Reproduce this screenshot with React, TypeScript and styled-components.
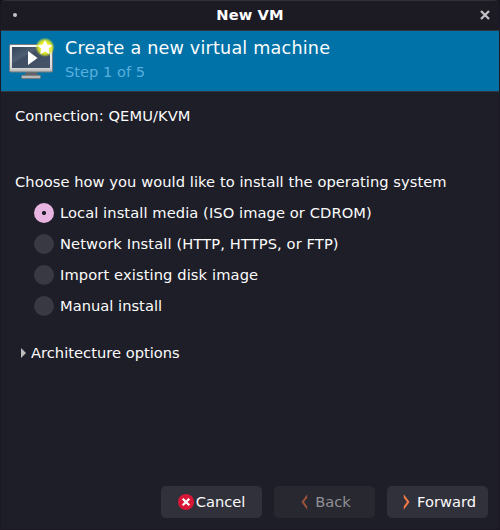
import React, { useState } from "react";
import styled, { createGlobalStyle } from "styled-components";

const GlobalStyle = createGlobalStyle`
  * { box-sizing: border-box; }
  body {
    margin: 0;
    background: #16141c;
    font-family: "DejaVu Sans", sans-serif;
    font-size: 14.667px;
    line-height: 17px;
    color: #fcfcfc;
  }
`;

const Window = styled.div`
  width: 500px;
  height: 530px;
  display: flex;
  flex-direction: column;
  background: #1e1e28;
  border: 1px solid #1a1823;
  border-top-color: #302f3a;
  border-radius: 6px 6px 0 0;
  overflow: hidden;
`;

const TitleBar = styled.header`
  height: 30px;
  flex: none;
  display: grid;
  grid-template-columns: 28px 1fr 28px;
  align-items: center;
  justify-items: center;
  background: #1c1a23;
  border-bottom: 1px solid #35353f;
`;

const WindowTitle = styled.h1`
  margin: 0;
  padding-bottom: 2px;
  font-size: 14.667px;
  font-weight: bold;
  line-height: 17px;
  letter-spacing: 0.12px;
  color: #fff;
`;

const MenuDot = styled.span`
  width: 4px;
  height: 4px;
  margin-top: -1px;
  border-radius: 50%;
  background: #c4c3c8;
`;

const IconButton = styled.button`
  display: flex;
  padding: 0 0 1px;
  border: 0;
  background: none;
`;

const Banner = styled.section`
  height: 61px;
  flex: none;
  display: flex;
  gap: 8px;
  padding-left: 8px;
  background: #0072a8;
  border-bottom: 1px solid #35353f;
`;

const BannerIcon = styled.svg`
  width: 48px;
  height: 48px;
  margin-top: 5px;
  flex: none;
`;

const BannerTitle = styled.h2`
  margin: 7px 0 0;
  font-size: 17.6px;
  font-weight: normal;
  line-height: 21px;
  letter-spacing: 0.19px;
`;

const BannerStep = styled.p`
  margin: 4px 0 0;
  color: #59afde;
`;

const Content = styled.main`
  flex: 1;
  display: flex;
  flex-direction: column;
  padding: 15px 14px 11px;
`;

const Line = styled.p<{ $tracking: number }>`
  margin: 0;
  letter-spacing: ${(p) => p.$tracking}px;
`;

const Prompt = styled(Line)`
  margin-top: 49px;
`;

const Options = styled.div`
  display: flex;
  flex-direction: column;
  gap: 11px;
  margin: 13px 0 0 19px;
`;

const Option = styled.label<{ $tracking: number }>`
  display: flex;
  align-items: center;
  gap: 6px;
  height: 20px;
  letter-spacing: ${(p) => p.$tracking}px;
`;

const OptionText = styled.span`
  padding-bottom: 2px;
`;

const Radio = styled.input`
  appearance: none;
  width: 20px;
  height: 20px;
  margin: 0;
  border-radius: 50%;
  background: #393943;
  &:checked {
    background: radial-gradient(circle, #1e1e28 1.7px, #e8b4e2 2.4px);
  }
`;

const Expander = styled.button`
  display: flex;
  align-items: center;
  align-self: flex-start;
  gap: 5px;
  margin: 28px 0 0 6px;
  padding: 0;
  border: 0;
  background: none;
  color: inherit;
  font: inherit;
  letter-spacing: 0.02px;
`;

const Actions = styled.footer`
  display: flex;
  justify-content: flex-end;
  gap: 12px;
  margin: auto -3px 0 0;
`;

const ActionButton = styled.button<{ $gap: number; $inset?: number }>`
  display: flex;
  align-items: center;
  justify-content: center;
  gap: ${(p) => p.$gap}px;
  width: 101px;
  height: 32px;
  padding: 0 0 0 ${(p) => p.$inset ?? 0}px;
  border: 0;
  border-radius: 5px;
  background: #31313b;
  color: #fcfcfc;
  font: inherit;
  &:disabled {
    background: #282831;
    color: #919196;
  }
`;

const ButtonText = styled.span`
  padding-bottom: 2px;
`;

const MonitorIcon = () => (
  <BannerIcon viewBox="0 0 48 48" aria-hidden="true">
    <defs>
      <linearGradient id="frame" x1="0" y1="0" x2="0" y2="1">
        <stop offset="0" stopColor="#fafafa" />
        <stop offset="0.85" stopColor="#d6d6d6" />
        <stop offset="1" stopColor="#b0b0b0" />
      </linearGradient>
      <linearGradient id="screen" x1="0" y1="0" x2="1" y2="1">
        <stop offset="0" stopColor="#36455a" />
        <stop offset="0.35" stopColor="#4f5f73" />
        <stop offset="0.42" stopColor="#3f4e62" />
        <stop offset="1" stopColor="#46556a" />
      </linearGradient>
      <radialGradient id="glow">
        <stop offset="0.5" stopColor="#f0ef1c" />
        <stop offset="0.72" stopColor="#dce72a" stopOpacity="0.85" />
        <stop offset="1" stopColor="#bfe03a" stopOpacity="0" />
      </radialGradient>
    </defs>
    <path d="M17 36h11l1 4H16z" fill="#5f6367" />
    <rect x="12.5" y="39.3" width="19" height="3.3" rx="0.8" fill="#b8b8b8" stroke="#73777a" />
    <rect x="0.5" y="8.5" width="43" height="27.5" rx="1.5" fill="url(#frame)" stroke="#777b7e" />
    <rect x="3" y="11" width="38" height="21" fill="url(#screen)" />
    <path d="M19 15v14l9.5-7z" fill="#fff" />
    <circle cx="36" cy="11.3" r="9.8" fill="url(#glow)" />
    <path
      d="M36 4.8l2.1 4.1 4.6.7-3.3 3.2.8 4.6-4.2-2.2-4.2 2.2.8-4.6-3.3-3.2 4.6-.7z"
      fill="#fff"
      stroke="#fff"
      strokeWidth="0.9"
      strokeLinejoin="round"
    />
  </BannerIcon>
);

const CloseIcon = () => (
  <svg width="10" height="10" viewBox="0 0 10 10" aria-hidden="true">
    <path d="M1 1l8 8M9 1l-8 8" stroke="#c2c1c6" strokeWidth="2.3" />
  </svg>
);

const CancelIcon = () => (
  <svg width="16" height="16" viewBox="0 0 16 16" aria-hidden="true">
    <circle cx="8" cy="8" r="8" fill="#da1636" />
    <path d="M4.7 4.7l6.6 6.6M11.3 4.7l-6.6 6.6" stroke="#fff" strokeWidth="2.2" />
  </svg>
);

const Chevron = ({ back = false }: { back?: boolean }) => (
  <svg width="7" height="16" viewBox="0 0 7 16" aria-hidden="true">
    <path
      d={back ? "M6.2.3L0.5 8l5.7 7.7V12.2L3 8l3.2-4.2z" : "M.8.3L6.5 8l-5.7 7.7V12.2L4 8 .8 3.8z"}
      fill={back ? "#98533b" : "#f27b47"}
    />
  </svg>
);

const Triangle = () => (
  <svg width="5" height="10" viewBox="0 0 5 10" aria-hidden="true">
    <path d="M0 0l5 5-5 5z" fill="#bcbcbf" />
  </svg>
);

const installMethods = [
  { label: "Local install media (ISO image or CDROM)", tracking: 0.08 },
  { label: "Network Install (HTTP, HTTPS, or FTP)", tracking: 0.11 },
  { label: "Import existing disk image", tracking: 0.11 },
  { label: "Manual install", tracking: 0.02 },
];

export default function App() {
  const [method, setMethod] = useState(0);
  return (
    <>
      <GlobalStyle />
      <Window>
        <TitleBar>
          <MenuDot />
          <WindowTitle>New VM</WindowTitle>
          <IconButton aria-label="Close"><CloseIcon /></IconButton>
        </TitleBar>
        <Banner>
          <MonitorIcon />
          <div>
            <BannerTitle>Create a new virtual machine</BannerTitle>
            <BannerStep>Step 1 of 5</BannerStep>
          </div>
        </Banner>
        <Content>
          <Line $tracking={0.08}>Connection: QEMU/KVM</Line>
          <Prompt $tracking={0.06}>Choose how you would like to install the operating system</Prompt>
          <Options>
            {installMethods.map(({ label, tracking }, i) => (
              <Option key={label} $tracking={tracking}>
                <Radio type="radio" name="method" checked={method === i} onChange={() => setMethod(i)} />
                <OptionText>{label}</OptionText>
              </Option>
            ))}
          </Options>
          <Expander><Triangle />Architecture options</Expander>
          <Actions>
            <ActionButton $gap={2}><CancelIcon /><ButtonText>Cancel</ButtonText></ActionButton>
            <ActionButton $gap={7} $inset={3} disabled><Chevron back /><ButtonText>Back</ButtonText></ActionButton>
            <ActionButton $gap={7} $inset={4}><Chevron /><ButtonText>Forward</ButtonText></ActionButton>
          </Actions>
        </Content>
      </Window>
    </>
  );
}
